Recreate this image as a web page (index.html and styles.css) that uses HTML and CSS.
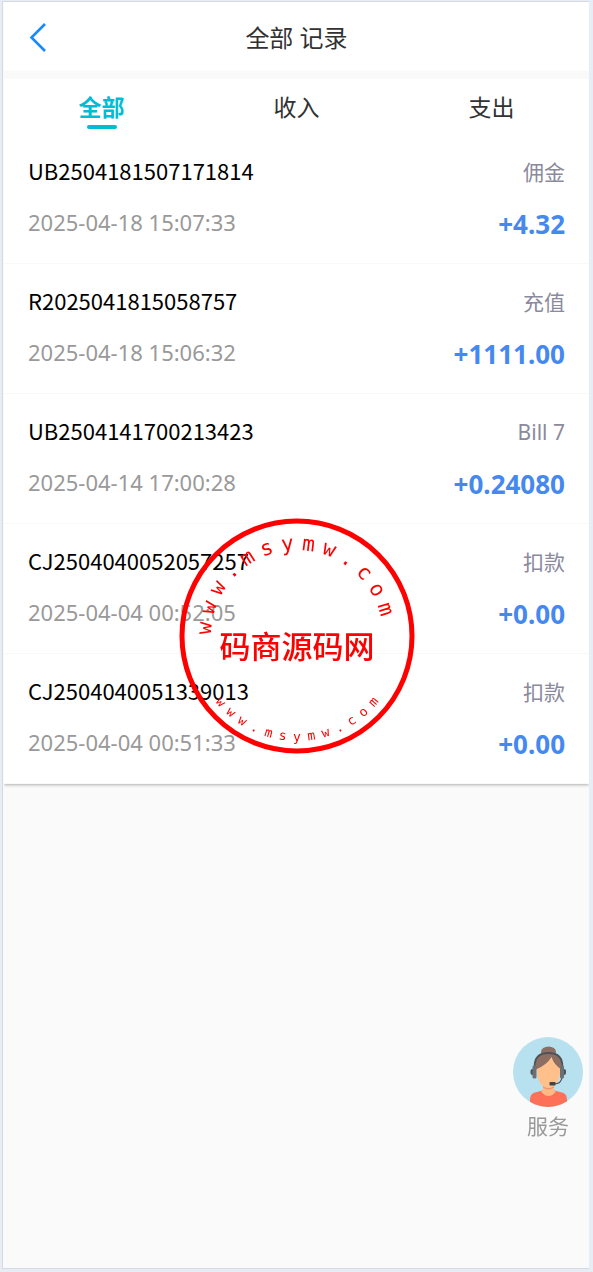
FILE: index.html
```html
<!DOCTYPE html>
<html lang="zh-CN">
  <head>
    <meta charset="UTF-8" />
    <meta name="viewport" content="width=device-width, initial-scale=1.0" />
    <title>全部 记录</title>
    <link rel="stylesheet" href="styles.css">
  </head>
  <body>
    <div class="app">
      <header class="header">
        <button class="back" type="button" aria-label="返回">
          <svg viewBox="0 0 18 30" fill="none">
            <path d="M16 2 2.500 15.500 16 29" stroke="#1989fa" stroke-width="2.600" />
          </svg>
        </button>
        <h1>全部 记录</h1>
      </header>

      <main class="card">
        <nav class="tabs">
          <button class="tab active" type="button">全部</button>
          <button class="tab" type="button">收入</button>
          <button class="tab" type="button">支出</button>
        </nav>
        <ul class="records">
          <li class="record">
            <div class="row">
              <span class="order">UB2504181507171814</span>
              <span class="type">佣金</span>
            </div>
            <div class="row">
              <span class="time">2025-04-18 15:07:33</span>
              <span class="amount">+4.32</span>
            </div>
          </li>
          <li class="record">
            <div class="row">
              <span class="order">R2025041815058757</span>
              <span class="type">充值</span>
            </div>
            <div class="row">
              <span class="time">2025-04-18 15:06:32</span>
              <span class="amount">+1111.00</span>
            </div>
          </li>
          <li class="record">
            <div class="row">
              <span class="order">UB2504141700213423</span>
              <span class="type">Bill 7</span>
            </div>
            <div class="row">
              <span class="time">2025-04-14 17:00:28</span>
              <span class="amount">+0.24080</span>
            </div>
          </li>
          <li class="record">
            <div class="row">
              <span class="order">CJ2504040052057257</span>
              <span class="type">扣款</span>
            </div>
            <div class="row">
              <span class="time">2025-04-04 00:52:05</span>
              <span class="amount">+0.00</span>
            </div>
          </li>
          <li class="record">
            <div class="row">
              <span class="order">CJ2504040051339013</span>
              <span class="type">扣款</span>
            </div>
            <div class="row">
              <span class="time">2025-04-04 00:51:33</span>
              <span class="amount">+0.00</span>
            </div>
          </li>
        </ul>
      </main>
    </div>

    <a class="service" href="#">
      <svg viewBox="0 0 70 70">
        <defs>
          <clipPath id="avatar"><circle cx="35" cy="35" r="35" /></clipPath>
        </defs>
        <g clip-path="url(#avatar)">
          <rect width="70" height="70" fill="#b7e1ef" />
          <ellipse cx="35.500" cy="15" rx="7.500" ry="5.500" fill="#8d6e63" />
          <path d="M17 70V62q0-6 7-7l7-2h9l7 2q7 1 7 7v8z" fill="#ff7058" />
          <path d="M30 46v7l-2 1.500q7.500 9 15 0L41 53v-7z" fill="#ffb984" />
          <path d="M30 49q5.500 4 11 0v1.500q-5.500 4-11 0z" fill="#e79a6c" />
          <path d="M24 27q0-10 11.500-10T47 27v9q-1 9-6 13-5.500 3.500-11 0-5-4-6-13z" fill="#ffc08c" />
          <path d="M22 33q-1-17 13.500-17T49 33q-8-5-10.500-13Q34 28 22 33z" fill="#8d6e63" />
          <path d="M21.500 30q0-14 14-14t14 14" fill="none" stroke="#4d5257" stroke-width="1.800" />
          <path d="M49 40q-.5 7-8 7" fill="none" stroke="#4d5257" stroke-width="1.200" />
          <rect x="17.500" y="32" width="4" height="6" rx="2" fill="#4d5257" />
          <rect x="49" y="32" width="4" height="6" rx="2" fill="#4d5257" />
          <rect x="19.500" y="28.500" width="4" height="13" rx="1.500" fill="#6b7075" />
          <rect x="47" y="28.500" width="4" height="13" rx="1.500" fill="#6b7075" />
          <rect x="36.500" y="45" width="6" height="3.500" rx=".8" fill="#40454a" />
        </g>
      </svg>
      <span>服务</span>
    </a>

    <svg class="seal" viewBox="-118 -118 236 236">
      <circle r="115" fill="none" stroke="#f00" stroke-width="5" />
      <text class="arc_top">www.msymw.com</text>
      <text class="name" x="0" y="22" text-anchor="middle">码商源码网</text>
      <text class="arc_bottom">www.msymw.com</text>
    </svg>

    <script>
      // place every letter of a text on a circle, side is 1 for top and -1 for bottom
      function bendText(text, radius, step, offset, side) {
        const size = parseFloat(getComputedStyle(text).fontSize);
        const half = size * 0.3;
        const x = [];
        const y = [];
        const rotate = [];

        [...text.textContent].forEach((letter, i) => {
          const deg = (i - 6) * step + offset;
          const rad = (deg * Math.PI) / 180;
          x.push(radius * Math.sin(rad) - half * Math.cos(rad));
          y.push(side * (-radius * Math.cos(rad) - half * Math.sin(rad)));
          rotate.push(side * deg);
        });

        text.setAttribute("x", x.join(" "));
        text.setAttribute("y", y.join(" "));
        text.setAttribute("rotate", rotate.join(" "));
      }

      bendText(document.querySelector(".arc_top"), 86, 13.2, -6, 1);
      bendText(document.querySelector(".arc_bottom"), 105, 8.2, 0, -1);
    </script>
  </body>
</html>
```
FILE: styles.css
```css
* {
  box-sizing: border-box;
  padding: 0;
  margin: 0;
}
body {
  min-height: 100vh;
  display: flex;
  padding: 1px 4px 3px 2px;
  background: #e7ecf5;
  font-family: "Noto Sans", "Noto Sans CJK SC", sans-serif;
  font-size: 22px;
  line-height: 32px;
}
button {
  border: none;
  background: none;
  font: inherit;
  color: inherit;
  cursor: pointer;
}
.app {
  flex: 1;
  padding-left: 1px;
  border: 1px solid #d6d9df;
  border-right: none;
  background: #fafafa;
}
.header {
  display: grid;
  grid-template-columns: 72px 1fr 72px;
  align-items: center;
  height: 69px;
  background: #fff;
  color: #323233;
}
.header h1 {
  font-size: 24px;
  font-weight: 400;
  text-align: center;
  padding-top: 2px;
}
.back {
  display: flex;
  padding-left: 25px;
}
.back svg {
  width: 18px;
  height: 30px;
}
.card {
  margin-top: 8px;
  background: #fff;
  box-shadow: 0 1px 3px rgba(0, 0, 0, 0.3);
  clip-path: inset(0 0 -6px 0);
}
.tabs {
  display: grid;
  grid-template-columns: repeat(3, 1fr);
  height: 55px;
  color: #323233;
}
.tab {
  display: flex;
  flex-direction: column;
  align-items: center;
  padding-top: 12px;
  font-size: 23px;
}
.tab.active {
  color: #00bcd4;
  font-weight: 700;
}
.tab.active::after {
  content: "";
  width: 30px;
  height: 4px;
  margin-top: 2px;
  border-radius: 2px;
  background: #00bcd4;
}
.records {
  list-style: none;
}
.record {
  display: grid;
  gap: 20px;
  padding: 22px 24px 23px;
  border-bottom: 1px solid #f8f8f8;
}
.row {
  display: flex;
  justify-content: space-between;
  align-items: flex-start;
}
.order,
.time {
  line-height: 28px;
}
.order {
  font-family: "Noto Sans CJK SC", sans-serif;
  color: #000;
}
.type {
  font-size: 21px;
  color: #8a8a9c;
}
.time {
  color: #999;
}
.amount {
  font-size: 26px;
  font-weight: 700;
  color: #4488f0;
}
.service {
  position: fixed;
  right: 10px;
  bottom: 130px;
  display: flex;
  flex-direction: column;
  align-items: center;
  gap: 3px;
  font-size: 21px;
  color: #999;
  text-decoration: none;
}
.service svg {
  width: 70px;
  height: 70px;
}
.seal {
  position: fixed;
  top: 50%;
  left: 50%;
  width: 236px;
  height: 236px;
  transform: translate(-50%, -50%);
  fill: #f00;
  pointer-events: none;
}
.arc_top {
  font: 21px "DejaVu Sans Mono", monospace;
}
.arc_bottom {
  font: 13px "DejaVu Sans Mono", monospace;
}
.name {
  font: 500 31px "Noto Sans CJK SC", sans-serif;
}
```
